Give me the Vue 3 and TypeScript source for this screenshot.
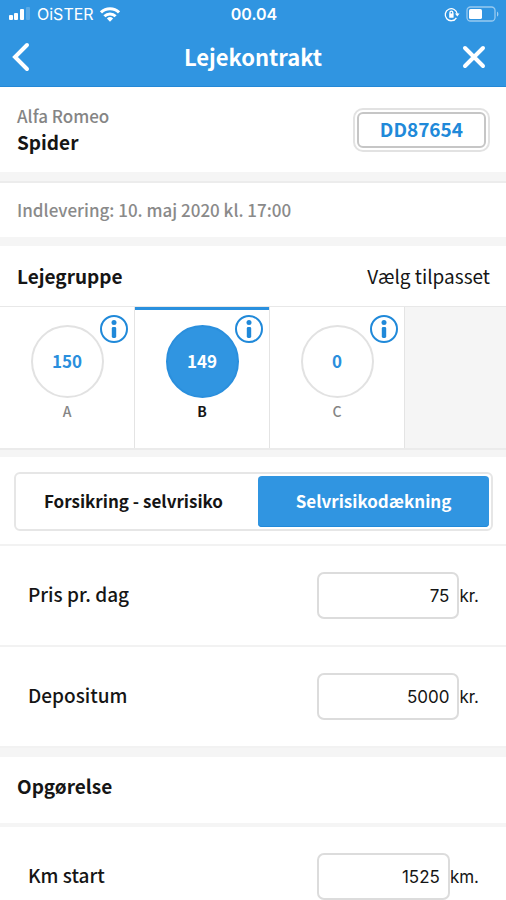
<script setup lang="ts">
import { ref } from 'vue'

interface Group {
  name: string
  count: number
}

interface Amount {
  id: string
  label: string
  unit: string
  value: string
}

const groups: Group[] = [
  { name: 'A', count: 150 },
  { name: 'B', count: 149 },
  { name: 'C', count: 0 },
]
const selected = ref('B')

const tabs = ['Forsikring - selvrisiko', 'Selvrisikodækning']
const activeTab = ref(tabs[1])

const prices = ref<Amount[]>([
  { id: 'price', label: 'Pris pr. dag', unit: 'kr.', value: '75' },
  { id: 'deposit', label: 'Depositum', unit: 'kr.', value: '5000' },
])
const readings = ref<Amount[]>([
  { id: 'km-start', label: 'Km start', unit: 'km.', value: '1525' },
])
</script>

<template>
  <div class="screen">
    <header class="top">
      <div class="status">
        <div class="carrier">
          <svg width="22" height="14" viewBox="0 0 22 14" fill="#fff" aria-hidden="true">
            <rect x="0" y="8" width="4" height="5" rx="1" />
            <rect x="5" y="6" width="4" height="7" rx="1" />
            <rect x="11" y="2" width="4" height="11" rx="1" />
            <rect x="17" y="0" width="4" height="13" rx="1" opacity=".2" />
          </svg>
          <span>OiSTER</span>
          <svg width="20" height="15" viewBox="0 0 20 15" fill="none" stroke="#fff" stroke-width="3" aria-hidden="true">
            <path d="M1 5.4a12.8 12.8 0 0 1 18 0" />
            <path d="M4.4 9.2a8 8 0 0 1 11.2 0" />
            <path d="M10 14.8 6.9 11.5a4.5 4.5 0 0 1 6.2 0z" fill="#fff" stroke="none" />
          </svg>
        </div>
        <span class="clock">00.04</span>
        <div class="power">
          <svg width="16" height="15" viewBox="0 0 16 15" fill="none" stroke="#fff" stroke-width="1.3" aria-hidden="true">
            <path d="M12.4 10.8A6 6 0 1 1 13.2 7" />
            <path d="M11 6.6h4.6l-2.3 2.8z" fill="#fff" stroke="none" />
            <rect x="5.2" y="6.4" width="4.4" height="4.4" rx=".6" fill="#fff" stroke="none" />
            <path d="M6 7V5.6a1.4 1.4 0 0 1 2.8 0V7" />
          </svg>
          <svg width="33" height="16" viewBox="0 0 33 16" fill="none" aria-hidden="true">
            <rect x="1" y="1" width="28" height="14" rx="3.5" stroke="#fff" stroke-opacity=".5" stroke-width="1.3" />
            <rect x="3" y="3" width="13" height="10" rx="1.6" fill="#fff" />
            <path d="M31 5.4c1.8.9 1.8 4.3 0 5.2z" fill="#fff" fill-opacity=".55" />
          </svg>
        </div>
      </div>
      <div class="bar">
        <button class="nav" type="button" aria-label="Tilbage">
          <svg width="20" height="30" viewBox="0 0 20 30" fill="none" stroke="#fff" stroke-width="4" aria-hidden="true">
            <path d="M16 3 4 15 16 27" stroke-linecap="round" />
          </svg>
        </button>
        <h1>Lejekontrakt</h1>
        <button class="nav close" type="button" aria-label="Luk">
          <svg width="24" height="24" viewBox="0 0 24 24" fill="none" stroke="#fff" stroke-width="4" stroke-linecap="round" aria-hidden="true">
            <path d="m3 3 18 18M21 3 3 21" />
          </svg>
        </button>
      </div>
    </header>

    <main>
      <section class="car">
        <div>
          <p class="make">Alfa Romeo</p>
          <h2>Spider</h2>
        </div>
        <div class="plate"><span>DD87654</span></div>
      </section>

      <section class="due">Indlevering: 10. maj 2020 kl. 17:00</section>

      <section class="group-head">
        <h2>Lejegruppe</h2>
        <a href="#">Vælg tilpasset</a>
      </section>
      <div class="groups">
        <div v-for="g in groups" :key="g.name" class="tile" :class="{ on: g.name === selected }">
          <button class="pick" type="button" :aria-pressed="g.name === selected" @click="selected = g.name">
            <span class="count">{{ g.count }}</span>
            <span class="letter">{{ g.name }}</span>
          </button>
          <button class="info" type="button" :aria-label="'Info om gruppe ' + g.name">
            <svg width="28" height="28" viewBox="0 0 28 28" aria-hidden="true">
              <circle cx="14" cy="14" r="13" fill="#fff" stroke="#2089d9" stroke-width="2" />
              <circle cx="14" cy="7.6" r="2.5" fill="#2089d9" />
              <rect x="11.8" y="12" width="4.4" height="11" rx="1.4" fill="#2089d9" />
            </svg>
          </button>
        </div>
      </div>

      <div class="switch-row">
        <div class="switch">
          <button v-for="t in tabs" :key="t" type="button" :class="{ on: t === activeTab }" :aria-pressed="t === activeTab" @click="activeTab = t">{{ t }}</button>
        </div>
      </div>

      <div v-for="a in prices" :key="a.id" class="row">
        <label :for="a.id">{{ a.label }}</label>
        <div class="field">
          <input :id="a.id" v-model="a.value" type="text" inputmode="numeric" />
          <span>{{ a.unit }}</span>
        </div>
      </div>

      <section class="settle-head"><h2>Opgørelse</h2></section>
      <div v-for="a in readings" :key="a.id" class="row">
        <label :for="a.id">{{ a.label }}</label>
        <div class="field">
          <input :id="a.id" v-model="a.value" type="text" inputmode="numeric" />
          <span>{{ a.unit }}</span>
        </div>
      </div>
    </main>
  </div>
</template>

<style>
body {
  background: #fff;
  overflow-x: hidden;
}
</style>

<style scoped>
.screen {
  font-family: "Noto Sans CJK SC", "Noto Sans", sans-serif;
  color: #151515;
  font-size: 19px;
  line-height: 28px;
}
h1,
h2,
p {
  margin: 0;
}
button {
  font: inherit;
  color: inherit;
  background: none;
  border: 0;
  padding: 0;
}
svg {
  display: block;
}
h2 {
  font-size: 19px;
  line-height: 28px;
  font-weight: 700;
}

.top {
  background: #3095e1;
  border-bottom: 1px solid #2488d6;
  color: #fff;
}
.status {
  display: grid;
  grid-template-columns: 1fr auto 1fr;
  align-items: center;
  height: 28px;
  padding: 0 7px 0 9px;
  font: 500 16px/20px Inter, sans-serif;
}
.carrier {
  display: flex;
  align-items: center;
  gap: 6px;
  font-weight: 400;
}
.clock {
  font-weight: 600;
}
.power {
  display: flex;
  align-items: center;
  justify-content: flex-end;
  gap: 6px;
}
.bar {
  display: grid;
  grid-template-columns: 1fr auto 1fr;
  align-items: center;
  height: 58px;
  padding: 0 11px;
}
.nav {
  justify-self: start;
}
.nav.close {
  justify-self: end;
  padding-right: 9px;
}
h1 {
  padding-bottom: 3px;
  font-size: 22px;
  line-height: 32px;
  font-weight: 700;
}

.car {
  display: flex;
  align-items: center;
  justify-content: space-between;
  height: 85px;
  padding: 0 16px 0 17px;
}
.make {
  font-size: 17px;
  line-height: 24px;
  font-weight: 500;
  color: #858585;
}
.plate {
  border: 2px solid #e2e2e2;
  border-radius: 10px;
  padding: 2px;
}
.plate span {
  display: block;
  border: 2px solid #c6c6c6;
  border-radius: 6px;
  padding: 1px 21px 3px;
  font-weight: 700;
  color: #2089d9;
}
.due {
  border-top: 9px solid #f5f5f5;
  border-bottom: 9px solid #f5f5f5;
  box-shadow: inset 0 2px #ececec;
  padding: 16px 17px 14px;
  font-size: 17px;
  line-height: 26px;
  font-weight: 500;
  color: #8a8a8a;
}
.group-head {
  display: flex;
  align-items: center;
  justify-content: space-between;
  height: 60px;
  padding: 0 16px 0 17px;
}
.group-head a {
  color: inherit;
  text-decoration: none;
}
.groups {
  display: flex;
  background: #f5f5f5;
  border-top: 1px solid #e8e8e8;
  border-bottom: 2px solid #ebebeb;
}
.tile {
  position: relative;
  flex: 0 0 135px;
  box-sizing: border-box;
  height: 141px;
  background: #fff;
  border-right: 1px solid #e4e4e4;
}
.tile.on {
  box-shadow: inset 0 3px #2a90de;
}
.pick {
  display: flex;
  flex-direction: column;
  align-items: center;
  width: 100%;
  height: 100%;
  padding-top: 18px;
}
.count {
  display: flex;
  align-items: center;
  justify-content: center;
  box-sizing: border-box;
  width: 73px;
  height: 73px;
  padding-bottom: 2px;
  border: 2px solid #e2e2e2;
  border-radius: 50%;
  font-size: 17px;
  font-weight: 700;
  color: #2a8fdd;
}
.letter {
  font-size: 14px;
  line-height: 26px;
  font-weight: 500;
  color: #858585;
}
.on .count {
  background: #3095e1;
  border-color: #2a8fdd;
  color: #fff;
}
.on .letter {
  font-weight: 700;
  color: #151515;
}
.info {
  position: absolute;
  top: 8px;
  right: 6px;
}

.switch-row {
  border-top: 7px solid #f5f5f5;
  border-bottom: 2px solid #f2f2f2;
  padding: 15px 13px 13px 14px;
}
.switch {
  display: grid;
  grid-template-columns: 1fr 1fr;
  gap: 9px;
  border: 2px solid #e6e6e6;
  border-radius: 6px;
  padding: 2px;
}
.switch button {
  height: 51px;
  padding-bottom: 2px;
  border-radius: 4px;
  font-size: 17px;
  font-weight: 700;
}
.switch button.on {
  background: #3095e1;
  box-shadow: inset 0 -1px #2089d9;
  color: #fff;
}

.row {
  display: flex;
  align-items: center;
  justify-content: space-between;
  height: 99px;
  padding: 0 27px 0 28px;
  border-bottom: 2px solid #f2f2f2;
  font-weight: 500;
}
.row label {
  padding-bottom: 4px;
}
.field {
  display: flex;
  align-items: center;
  width: 162px;
  font: 400 17px/24px Inter, sans-serif;
}
.field input {
  flex: 1;
  min-width: 0;
  box-sizing: border-box;
  height: 47px;
  border: 2px solid #dcdcdc;
  border-radius: 7px;
  padding: 0 8px;
  font: inherit;
  color: inherit;
  text-align: right;
  background: #fff;
}
.settle-head {
  border-top: 9px solid #f5f5f5;
  border-bottom: 4px solid #f5f5f5;
  padding: 15px 17px 23px;
}
</style>
